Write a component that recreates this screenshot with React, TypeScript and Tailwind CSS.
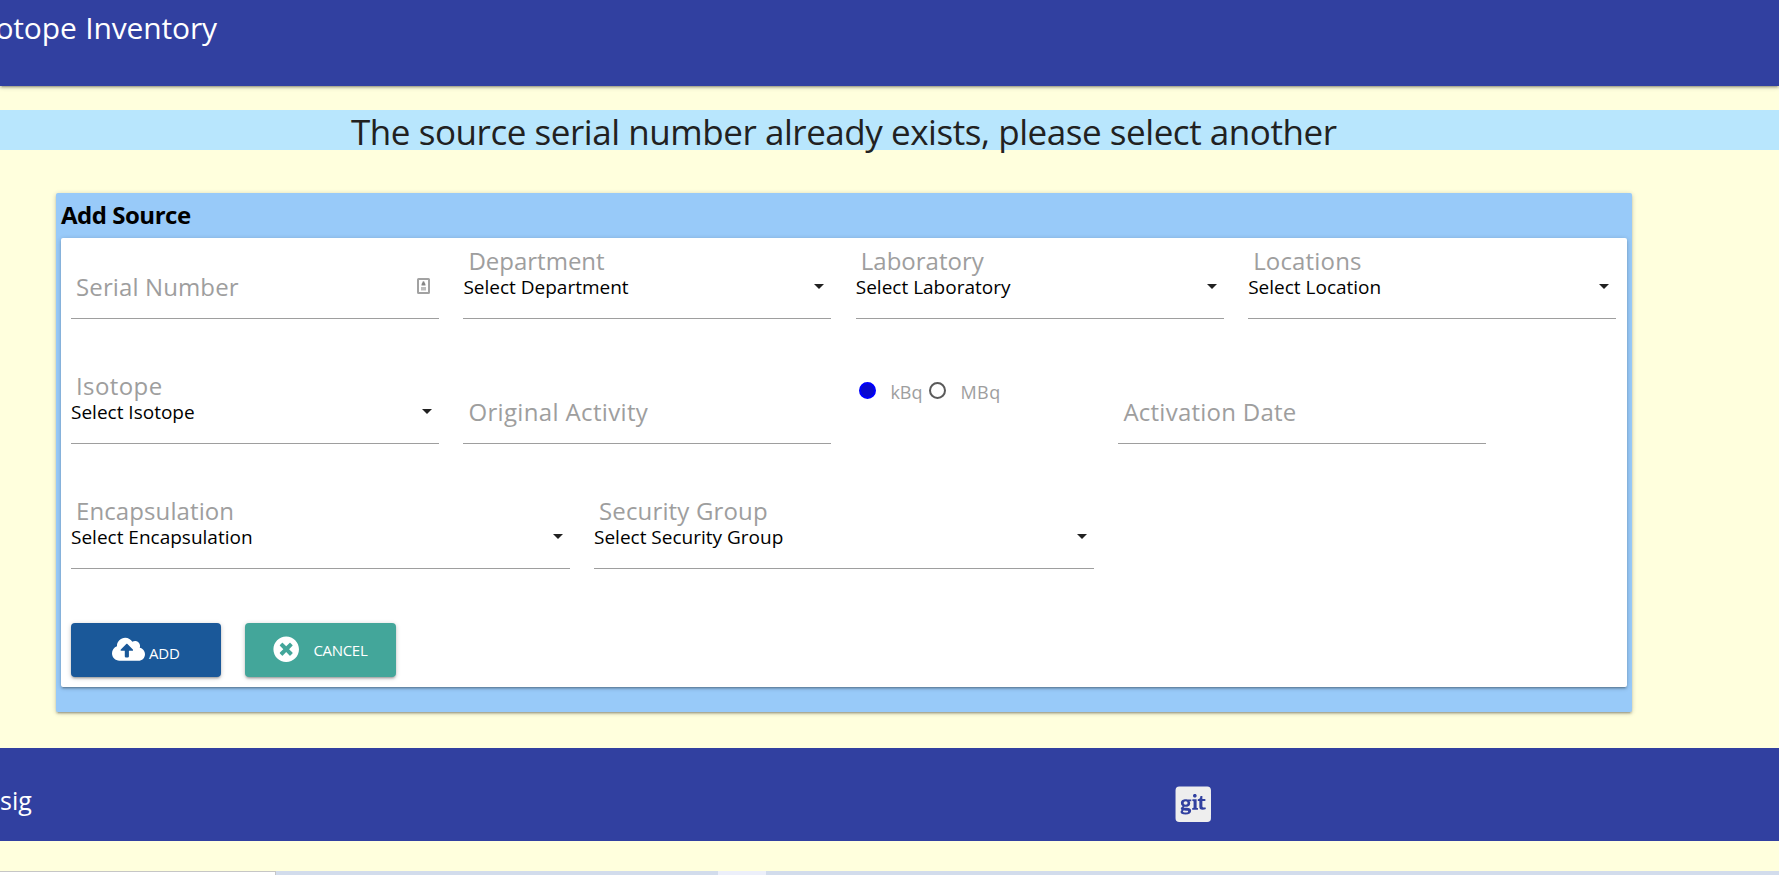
import type { ReactNode } from "react";
import { FaCloudUploadAlt, FaTimesCircle, FaGitSquare } from "react-icons/fa";

function ContactIcon() {
  return (
    <svg width="13" height="16" viewBox="0 0 13 16" className="mt-[40px] mr-[9px] shrink-0">
      <rect x="1" y="1" width="11" height="14" rx="0.5" fill="#fff" stroke="#a2a2a2" strokeWidth="2" />
      <path d="M6.500 3.200c1 0 1.200 1 1.100 1.900.6.400.9 1 .9 2.400h-4c0-1.400.3-2 .9-2.400C5.300 4.200 5.500 3.200 6.500 3.200z" fill="#858585" />
      <rect x="4" y="9" width="5" height="3.500" fill="#bdbdbd" />
    </svg>
  );
}

function Field({ width, children }: { width: string; children: ReactNode }) {
  return <div className={`flex h-[81px] shrink-0 justify-between border-b border-[#9e9e9e] ${width}`}>{children}</div>;
}

function InputField({ label, tracking, icon }: { label: string; tracking: string; icon?: ReactNode }) {
  return (
    <Field width="w-[368px]">
      <label className={`pt-[33px] pl-[5px] text-[24px] leading-[31px] whitespace-nowrap text-[#9e9e9e] ${tracking}`}>{label}</label>
      {icon}
    </Field>
  );
}

function SelectField({ label, value, tracking, width = "w-[368px]" }: { label: string; value: string; tracking: string; width?: string }) {
  return (
    <Field width={width}>
      <div className="pt-[7px]">
        <div className={`pl-[5px] text-[24px] leading-[31px] whitespace-nowrap text-[#9e9e9e] ${tracking}`}>{label}</div>
        <div className="text-[19px] leading-[22px] whitespace-nowrap text-black">{value}</div>
      </div>
      <svg width="10" height="5" viewBox="0 0 10 5" className="mt-[46px] mr-[7px] shrink-0">
        <path d="M0 0h10L5 5z" fill="#212121" />
      </svg>
    </Field>
  );
}

export default function App() {
  return (
    <div className="flex h-[875px] w-full flex-col overflow-hidden bg-[#ffffdd] font-['Open_Sans',sans-serif]">
      <header className="h-[86px] shrink-0 bg-[#3140a0] pt-[8px] shadow-[0_2px_2px_0_rgba(0,0,0,0.14),0_3px_1px_-2px_rgba(0,0,0,0.12),0_1px_5px_0_rgba(0,0,0,0.2)]">
        <div className="flex w-[217px] justify-end text-[30px] leading-[40px] tracking-[-0.150px] whitespace-nowrap text-white [word-spacing:1px]">
          otope Inventory
        </div>
      </header>

      <div className="mt-[24px] h-[40px] shrink-0 bg-[#b8e6fd] pl-[351px] text-[35px] leading-[43px] tracking-[-0.450px] whitespace-nowrap text-[#212121]">
        The source serial number already exists, please select another
      </div>

      <main className="mt-[43px] ml-[56px] h-[519px] w-[1576px] shrink-0 rounded-[2px] bg-[#98caf9] px-[5px] shadow-[0_2px_2px_0_rgba(0,0,0,0.14),0_3px_1px_-2px_rgba(0,0,0,0.12),0_1px_5px_0_rgba(0,0,0,0.2)]">
        <h2 className="h-[45px] text-[24px] leading-[43px] font-bold tracking-[-0.480px] text-black">Add Source</h2>
        <form className="flex h-[449px] flex-col rounded-[2px] bg-white pl-[10px] shadow-[0_2px_2px_0_rgba(0,0,0,0.14),0_3px_1px_-2px_rgba(0,0,0,0.12),0_1px_5px_0_rgba(0,0,0,0.2)]">
          <div className="flex gap-[24.400px]">
            <InputField label="Serial Number" tracking="tracking-[0.120px]" icon={<ContactIcon />} />
            <SelectField label="Department" value="Select Department" tracking="tracking-[0px]" />
            <SelectField label="Laboratory" value="Select Laboratory" tracking="tracking-[0px]" />
            <SelectField label="Locations" value="Select Location" tracking="tracking-[0.160px]" />
          </div>

          <div className="mt-[44px] flex">
            <SelectField label="Isotope" value="Select Isotope" tracking="tracking-[0.400px]" />
            <div className="ml-[24.400px]">
              <InputField label="Original Activity" tracking="tracking-[0.350px]" />
            </div>
            <div className="ml-[28px] flex w-[259px] items-start pt-[19px] text-[18px] leading-[20px] text-[#9e9e9e]">
              <span className="size-[17px] shrink-0 rounded-full border-2 border-[#0000ff] bg-[#0909cf]" />
              <span className="ml-[14px] w-[39px]">kBq</span>
              <span className="size-[17px] shrink-0 rounded-full border-2 border-[#5a5a5a]" />
              <span className="ml-[14px] tracking-[0.500px]">MBq</span>
            </div>
            <InputField label="Activation Date" tracking="tracking-[0.250px]" />
          </div>

          <div className="mt-[44px] flex gap-[24px]">
            <SelectField label="Encapsulation" value="Select Encapsulation" tracking="tracking-[0.100px]" width="w-[499px]" />
            <SelectField label="Security Group" value="Select Security Group" tracking="tracking-[0.150px]" width="w-[499.500px]" />
          </div>

          <div className="mt-[54px] flex gap-[24px] text-[15px] leading-[20px] text-white">
            <button type="button" className="flex h-[54px] w-[150px] items-start rounded-[4px] bg-[#1a5899] pl-[41px] shadow-[0_2px_2px_0_rgba(0,0,0,0.14),0_3px_1px_-2px_rgba(0,0,0,0.12),0_1px_5px_0_rgba(0,0,0,0.2)]">
              <FaCloudUploadAlt className="mt-[13px] h-[26.400px] w-[33px]" />
              <span className="mt-[20px] ml-[4px] tracking-[-0.200px]">ADD</span>
            </button>
            <button type="button" className="flex h-[54px] w-[151px] items-start rounded-[4px] bg-[#43a69a] pl-[28px] shadow-[0_2px_2px_0_rgba(0,0,0,0.14),0_3px_1px_-2px_rgba(0,0,0,0.12),0_1px_5px_0_rgba(0,0,0,0.2)]">
              <FaTimesCircle className="mt-[13px] size-[26.400px]" />
              <span className="mt-[17px] ml-[14px] tracking-[-0.300px]">CANCEL</span>
            </button>
          </div>
        </form>
      </main>

      <footer className="mt-[36px] flex h-[93px] shrink-0 bg-[#3140a0]">
        <div className="w-[1173px] pt-[37px] text-[25px] leading-[30px] text-white">sig</div>
        <FaGitSquare className="mt-[35.500px] size-[40.500px] text-[#eeeeee]" />
      </footer>

      <div className="mt-[30px] flex h-[4px] shrink-0 bg-[#d2dcec]">
        <div className="w-[276px] border-t border-r border-[#c6c6c6] bg-white" />
        <div className="ml-[442px] w-[48px] bg-[#eceffa]" />
      </div>
    </div>
  );
}
